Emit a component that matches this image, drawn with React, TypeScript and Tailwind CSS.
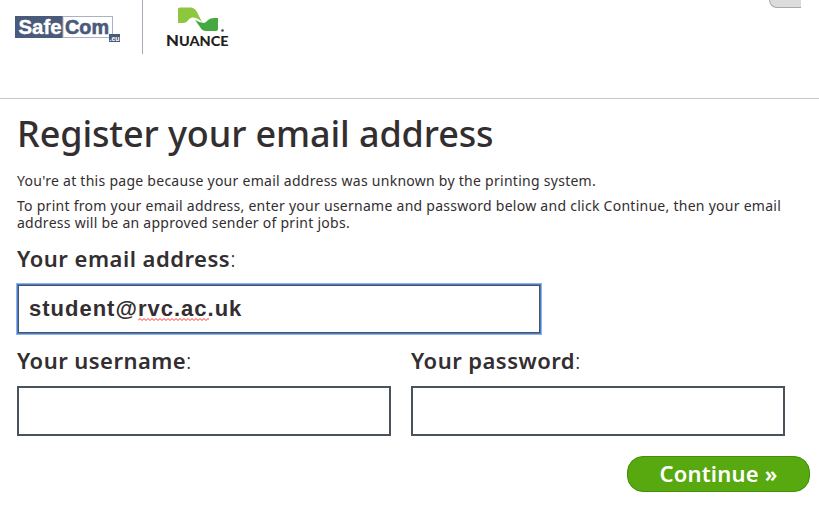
import React, { useState } from 'react';

const SafeComLogo: React.FC = () => (
  <svg width="106" height="28" viewBox="0 0 106 28" className="block" role="img" aria-label="SafeCom.eu">
    <rect x="0" y="0" width="48" height="22" fill="#4a5a7b" />
    <rect x="48" y="0.5" width="49.5" height="21" fill="#fff" stroke="#a9b1c4" />
    <text x="3.5" y="18" textLength="43" lengthAdjust="spacingAndGlyphs" fill="#fff" stroke="#fff" strokeWidth="0.4" className="font-['Liberation_Sans'] text-[21px] font-bold">Safe</text>
    <text x="50" y="18" textLength="44" lengthAdjust="spacingAndGlyphs" fill="#4a5a7b" stroke="#4a5a7b" strokeWidth="0.6" className="font-['Liberation_Sans'] text-[21px] font-bold">Com</text>
    <rect x="94" y="18" width="11" height="8" fill="#4a5a7b" />
    <text x="94.5" y="24.5" textLength="10" lengthAdjust="spacingAndGlyphs" fill="#fff" className="font-['Liberation_Sans'] text-[8px] font-bold">.eu</text>
  </svg>
);

const NuanceLogo: React.FC = () => (
  <svg width="64" height="42" viewBox="0 0 64 42" className="block" role="img" aria-label="Nuance">
    <path d="M12 16V2Q12 0.5 14 0.5H25Q29 1 31 5L36 15Q31 10 26 10.5Q23 11 21.5 14Q20 16 17 16Z" fill="#8dc63f" />
    <path d="M29 13Q34 16 38 16Q40 15.5 42 13Q44.5 11 48 11H52V22Q52 24 50 24H40Q36 24 34 20Z" fill="#45a942" />
    <circle cx="56.5" cy="23.5" r="1.3" fill="#444" />
    <text x="0" y="39" textLength="62.5" lengthAdjust="spacingAndGlyphs" fill="#231f20" className="font-[Lato] text-[13px] font-black">
      <tspan className="text-[15px]">N</tspan>UANCE
    </text>
  </svg>
);

interface FieldProps {
  id: string;
  label: string;
  type?: string;
}

const Field: React.FC<FieldProps> = ({ id, label, type = 'text' }) => (
  <div className="w-[374px]">
    <label htmlFor={id} className="block h-[38px] text-[22px] leading-[24px] font-semibold tracking-[0.45px]">
      {label}<span className="font-light">:</span>
    </label>
    <input id={id} type={type} className="block h-[50px] w-full border-2 border-[#4a525c] bg-white px-[10px] outline-none" />
  </div>
);

const App: React.FC = () => {
  const [email] = useState({ name: 'student@', host: 'rvc.ac', rest: '.uk' });

  return (
    <div className="h-[509px] w-[819px] overflow-hidden bg-white font-['Noto_Sans',sans-serif] text-[#332e30]">
      <header className="flex h-[99px] items-start border-b border-[#c8c8c8]">
        <div className="pt-4 pl-[15px]">
          <SafeComLogo />
        </div>
        <div className="ml-[21px] h-[54px] w-px bg-[#aaaabb]" />
        <div className="ml-[23px] pt-[7px]">
          <NuanceLogo />
        </div>
        <div className="mr-[18px] ml-auto h-[8px] w-[32px] rounded-bl-[10px] border-b border-l border-[#a8a8a8] bg-[#dcdcdc]" />
      </header>

      <main className="pl-[17px]">
        <h1 className="h-[73px] pt-[11px] text-[36px] leading-[48px] font-medium tracking-[-0.12px] whitespace-nowrap">
          Register your email address
        </h1>
        <p className="text-[14px] leading-[17px] tracking-[0.27px] whitespace-nowrap">
          You're at this page because your email address was unknown by the printing system.
        </p>
        <p className="mt-2 text-[14px] leading-[17px] tracking-[0.265px] whitespace-nowrap">
          To print from your email address, enter your username and password below and click Continue, then your email
          <br />
          address will be an approved sender of print jobs.
        </p>

        <label className="mt-[15px] block h-[38px] text-[22px] leading-[24px] font-semibold tracking-[0.5px]">
          Your email address<span className="font-light">:</span>
        </label>
        <div className="flex h-[50px] w-[524px] items-center border border-[#4a7cc8] px-[11px] pb-[2px] font-['Liberation_Sans',sans-serif] text-[22px] font-bold tracking-[1px] shadow-[0_0_0_1px_#8db4f0,inset_0_0_0_1px_#4a525c]">
          <span>{email.name}</span>
          <span className="relative">
            {email.host}
            <svg width="71" height="3" viewBox="0 0 71 3" className="absolute top-[26px] left-0">
              <path d={'M0 2.5' + 'l2 -2l2 2'.repeat(18)} fill="none" stroke="#f00" strokeWidth="0.8" />
            </svg>
          </span>
          <span>{email.rest}</span>
        </div>

        <div className="mt-[14px] flex gap-5">
          <Field id="username" label="Your username" />
          <Field id="password" label="Your password" type="password" />
        </div>

        <div className="mt-5 flex justify-end pr-[9px]">
          <button type="button" className="h-[36px] w-[183px] rounded-[16px] border border-[#3f8f08] bg-[#58a80f] pb-[3px] text-[22px] leading-[30px] font-semibold tracking-[0.2px] text-white">
            Continue »
          </button>
        </div>
      </main>
    </div>
  );
};

export default App;
